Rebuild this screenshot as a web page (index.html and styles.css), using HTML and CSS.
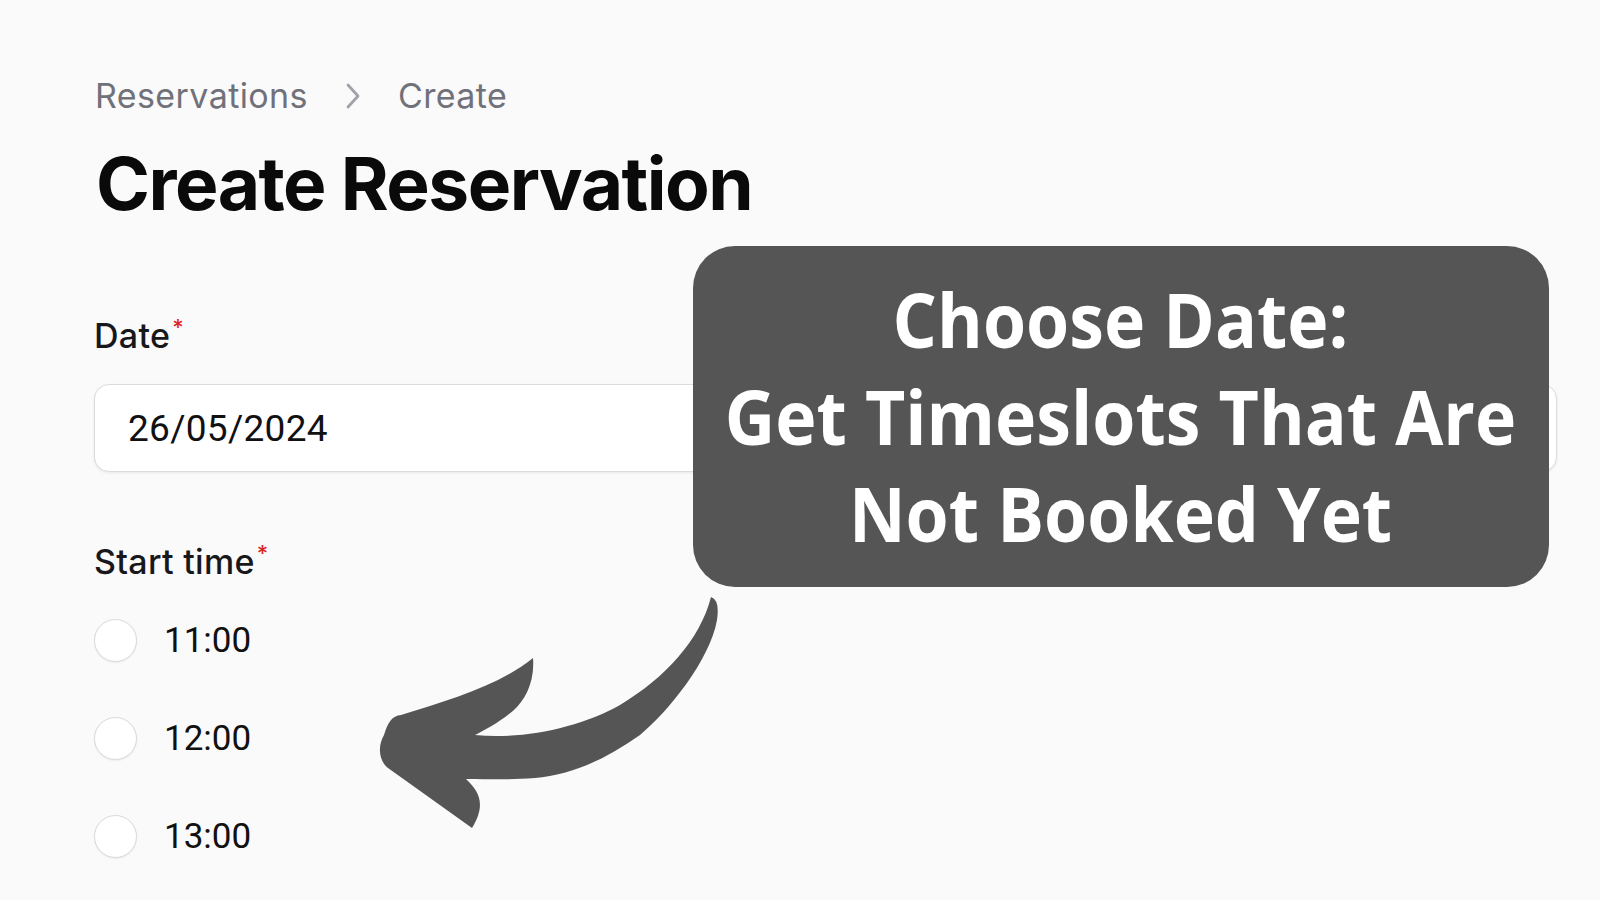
FILE: index.html
```html
<!DOCTYPE html>
<html lang="en">
<head>
<meta charset="utf-8">
<title>Create Reservation</title>
<link rel="stylesheet" href="styles.css">
</head>
<body>
<main class="page">
  <nav class="breadcrumb">
    <span class="crumb">Reservations</span>
    <svg class="chev" viewBox="0 0 20 28" width="20" height="28"><polyline points="5,3 15,14 5,25" fill="none" stroke="#a1a1aa" stroke-width="2.8" stroke-linecap="round" stroke-linejoin="round"/></svg>
    <span class="crumb">Create</span>
  </nav>
  <h1 class="title">Create Reservation</h1>

  <form class="form">
    <div class="field">
      <label class="label">Date<sup class="req">*</sup></label>
      <div class="input">26/05/2024</div>
    </div>
    <div class="field field-time">
      <label class="label">Start time<sup class="req">*</sup></label>
      <div class="options">
        <div class="option"><span class="radio"></span><span class="opt-text">11:00</span></div>
        <div class="option"><span class="radio"></span><span class="opt-text">12:00</span></div>
        <div class="option"><span class="radio"></span><span class="opt-text">13:00</span></div>
      </div>
    </div>
  </form>
</main>

<div class="callout">
  <p class="callout-text">Choose Date:<br>Get Timeslots That Are<br>Not Booked Yet</p>
</div>

<svg class="arrow" viewBox="0 0 1600 900" width="1600" height="900">
  <path fill="#555555" d="M 711 597 Q 720 600 717 620 C 710 660 668 712 640 735 C 605 760 570 775 535 778 C 510 780 490 779 466 779 C 480 792 486 805 472 828 L 388 768 C 378 760 378 745 384 735 C 388 722 392 716 401 715 C 450 700 500 685 533 658 C 535 682 525 700 514 710 C 500 722 485 730 475 735 C 520 740 580 728 620 705 C 665 678 700 640 711 597 Z"/>
</svg>
</body>
</html>
```

FILE: styles.css
```css
html, body {
  margin: 0;
  padding: 0;
}
body {
  width: 1600px;
  height: 900px;
  overflow: hidden;
  background: #fafafa;
  font-family: Inter, "Noto Sans", sans-serif;
  color: #18181b;
  position: relative;
}
.page {
  padding: 75px 43px 0 94px;
}
.breadcrumb {
  display: flex;
  align-items: center;
  gap: 35px;
  height: 42px;
  padding-left: 1px;
}
.crumb {
  font-size: 34px;
  line-height: 42px;
  color: #71717a;
  letter-spacing: 0.4px;
}
.chev {
  display: block;
}
.title {
  margin: 31px 0 0 2px;
  font-size: 73px;
  line-height: 72px;
  font-weight: 700;
  letter-spacing: -1.5px;
  color: #0a0a0a;
}
.form {
  margin-top: 95px;
}
.label {
  display: block;
  font-size: 34px;
  line-height: 42px;
  font-weight: 500;
  color: #18181b;
  letter-spacing: 0.3px;
}
.req {
  color: #dc2626;
  font-size: 22px;
  line-height: 0;
  vertical-align: 0.6em;
  margin-left: 2px;
  font-weight: 500;
}
.input {
  margin-top: 27px;
  height: 86px;
  border: 1px solid #dcdcde;
  border-radius: 15px;
  background: #fff;
  box-shadow: 0 1px 3px rgba(0,0,0,0.08);
  display: flex;
  align-items: center;
  padding-left: 33px;
  font-family: Roboto, "Liberation Sans", sans-serif;
  font-size: 37px;
  letter-spacing: 0.3px;
  color: #111;
}
.field-time {
  margin-top: 69px;
}
.options {
  margin-top: 32px;
  display: flex;
  flex-direction: column;
  gap: 48px;
}
.option {
  display: flex;
  align-items: center;
  height: 50px;
  gap: 27px;
}
.radio {
  width: 41px;
  height: 41px;
  border-radius: 50%;
  background: #fff;
  border: 1px solid #d9d9dc;
  box-shadow: 0 1px 2px rgba(0,0,0,0.06);
}
.opt-text {
  font-family: Roboto, "Liberation Sans", sans-serif;
  font-size: 35px;
  color: #111;
}
.callout {
  position: absolute;
  left: 693px;
  top: 246px;
  width: 856px;
  height: 341px;
  border-radius: 42px;
  background: #555555;
  display: flex;
  align-items: center;
  justify-content: center;
}
.callout-text {
  margin: 0;
  text-align: center;
  color: #fff;
  font-family: "Open Sans", sans-serif;
  font-weight: 700;
  font-size: 75px;
  line-height: 97px;
  white-space: nowrap;
  transform: scaleX(0.93);
}
.arrow {
  position: absolute;
  left: 0;
  top: 0;
  pointer-events: none;
}
```
